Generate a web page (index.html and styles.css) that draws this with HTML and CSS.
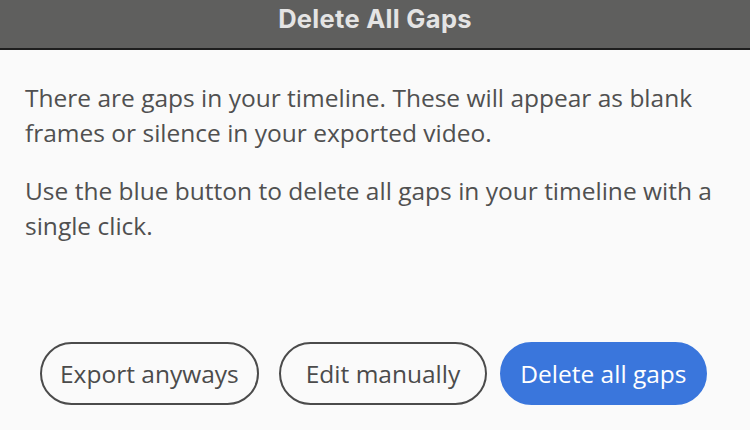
FILE: index.html
```html
<!DOCTYPE html>
<html lang="en">

<head>
    <meta charset="UTF-8">
    <title>Delete All Gaps</title>
    <link rel="stylesheet" href="styles.css">
</head>

<body>

    <div class="titlebar">
        <h1>Delete All Gaps</h1>
    </div>

    <div class="content">
        <p>There are gaps in your timeline. These will appear as blank frames or silence in your exported video.</p>
        <p>Use the blue button to delete all gaps in your timeline with a single click.</p>
    </div>

    <div class="actions">
        <button class="btn-outline">Export anyways</button>
        <button class="btn-outline btn-edit">Edit manually</button>
        <button class="btn-primary">Delete all gaps</button>
    </div>

</body>

</html>
```

FILE: styles.css
```css
body {
    margin: 0;
    width: 750px;
    height: 430px;
    background: #fafafa;
    font-family: "Open Sans", sans-serif;
    display: flex;
    flex-direction: column;
    overflow: hidden;
}

.titlebar {
    height: 44px;
    padding-top: 4px;
    background: #5f5f5e;
    border-bottom: 2px solid #1e1e1e;
    text-align: center;
}

.titlebar h1 {
    margin: 0;
    font-family: Inter, sans-serif;
    font-size: 25.5px;
    letter-spacing: 0.3px;
    line-height: 30px;
    font-weight: 700;
    color: #e4e4e4;
}

.content {
    padding: 30px 24px 0 25px;
    flex: 1;
}

.content p {
    margin: 0 0 23px 0;
    font-size: 24.5px;
    line-height: 35px;
    color: #505050;
}

.actions {
    display: flex;
    gap: 20px;
    padding: 0 0 25px 40px;
}

button {
    height: 63px;
    padding: 0 18px;
    font-family: "Open Sans", sans-serif;
    font-size: 24.5px;
    white-space: nowrap;
    flex-shrink: 0;
    border-radius: 32px;
    cursor: pointer;
}

.btn-outline {
    background: transparent;
    border: 2px solid #4b4b4b;
    color: #4b4b4b;
}

.btn-edit {
    padding: 0 25px;
}

.btn-primary {
    margin-left: -7px;
    background: #3a76dc;
    border: 2px solid #3a76dc;
    color: white;
}
```
